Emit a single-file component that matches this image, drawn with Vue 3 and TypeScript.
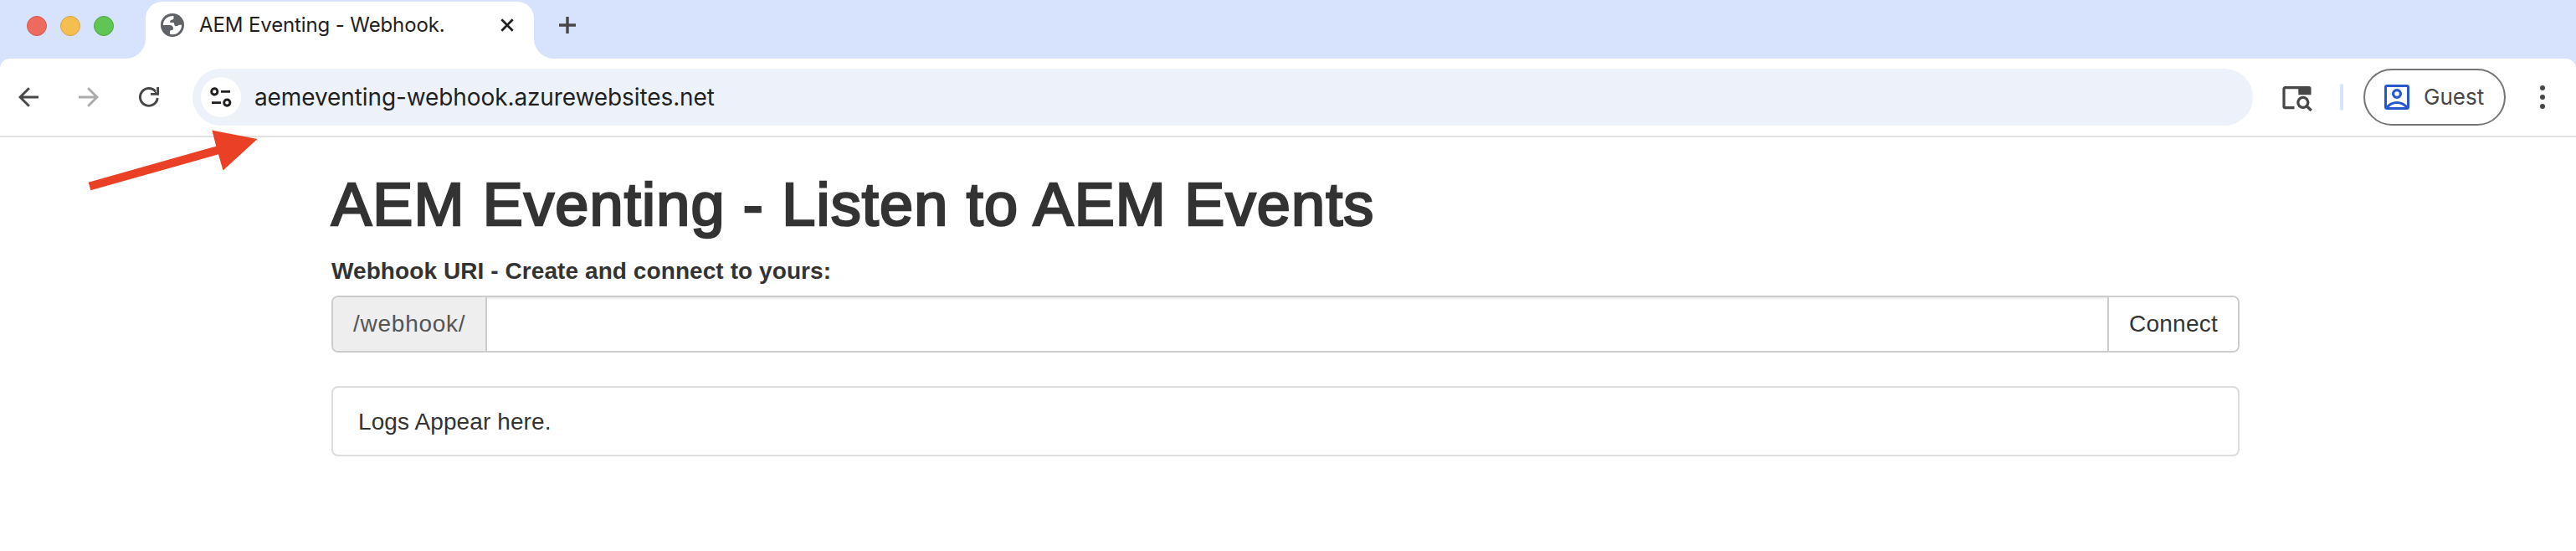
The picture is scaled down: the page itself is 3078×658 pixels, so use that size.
<script setup lang="ts">
const tabTitle = 'AEM Eventing - Webhook.'
const address = 'aemeventing-webhook.azurewebsites.net'
const lights: string[] = ['red', 'yellow', 'green']
</script>

<template>
  <div class="window">
    <header class="strip">
      <div class="lights">
        <span v-for="c in lights" :key="c" class="light" :class="c"></span>
      </div>
      <div class="tab">
        <svg class="globe" viewBox="0 0 28 28">
          <circle cx="14" cy="14" r="14" fill="#5f6368" />
          <path
            fill="#fff"
            d="M2.900 14C2.900 7.500 8 2.900 15.500 3v2.500c0 1.600-1 2-2.200 2.200-1.600.2-2.200.9-2.200 2.200 0 1 .8 1.200 2 1.200h1.500c1.200 0 1.500.6 1.600 1.800.2 1.500 1 2.200 2.500 2.200 1.800 0 2.300-1.400 3.500-1.400H25.100C25 20.500 20 25.300 14 25.200c-1 0-2-.1-3-.4v-3c0-1.200.6-1.600 2-1.700 1.500-.1 2-.8 2-2.100 0-2.600-1.500-4-4.500-4z"
          />
        </svg>
        <span class="tab-title">{{ tabTitle }}</span>
        <svg class="close" viewBox="0 0 16 16">
          <path d="M1.300 1.300 14.700 14.700M14.700 1.300 1.300 14.700" stroke="#1f1f1f" stroke-width="2.700" />
        </svg>
      </div>
      <svg class="plus" viewBox="0 0 20 20">
        <path d="M10 0V20M0 10H20" stroke="#474747" stroke-width="3.400" />
      </svg>
    </header>

    <nav class="toolbar">
      <svg class="nav back" viewBox="0 0 24 24">
        <path d="M24 12H2M12.800 1.200 2 12l10.800 10.800" fill="none" stroke="#474747" stroke-width="2.900" />
      </svg>
      <svg class="nav forward" viewBox="0 0 24 24">
        <path d="M0 12H22M11.200 1.200 22 12 11.200 22.800" fill="none" stroke="#ababab" stroke-width="2.900" />
      </svg>
      <svg class="nav reload" viewBox="0 0 24 24">
        <path d="M22.200 13A10.400 10.400 0 1 1 19.800 5.200" fill="none" stroke="#474747" stroke-width="2.900" />
        <path d="M24 0V9.800H14V7.100H21.200V0z" fill="#474747" />
        <path d="M18 3.500 22 7.500V9H19.500z" fill="#474747" />
      </svg>
      <div class="omnibox">
        <span class="site">
          <svg viewBox="0 0 26 24">
            <g fill="none" stroke="#1f1f1f" stroke-width="2.900">
              <circle cx="5.300" cy="5.400" r="3.600" />
              <circle cx="20.300" cy="18.600" r="3.600" />
              <path d="M13 5.400H24M2 18.600H13" />
            </g>
          </svg>
        </span>
        <span class="address">{{ address }}</span>
      </div>
      <svg class="search-tabs" viewBox="0 0 36 31">
        <path d="M14.500 26.600H3.300Q2 26.600 2 25.300V4Q2 2.700 3.300 2.700H32" fill="none" stroke="#474747" stroke-width="3.200" />
        <path d="M3.300 1.100H32Q34.500 1.100 34.500 3.600V11.300H19.300V3H3.300z" fill="#474747" />
        <circle cx="24.800" cy="20.300" r="6" fill="none" stroke="#474747" stroke-width="3.300" />
        <path d="M28.800 24.300 34.700 30" stroke="#474747" stroke-width="3.400" />
      </svg>
      <span class="divider"></span>
      <button class="guest">
        <svg viewBox="0 0 30 30">
          <g fill="none" stroke="#2757cf" stroke-width="3">
            <rect x="1.500" y="1.500" width="27" height="27" rx="1.800" />
            <circle cx="15" cy="11" r="4.400" stroke-width="3.200" />
            <path d="M3 27.200Q8 21.500 15 21.500T27 27.200" />
          </g>
        </svg>
        <span>Guest</span>
      </button>
      <span class="menu"><i v-for="n in 3" :key="n"></i></span>
    </nav>

    <main class="page">
      <h1>AEM Eventing - Listen to AEM Events</h1>
      <label class="label" for="hook">Webhook URI - Create and connect to yours:</label>
      <div class="group">
        <span class="addon">/webhook/</span>
        <input id="hook" class="field" type="text" />
        <button class="connect"><span>Connect</span></button>
      </div>
      <div class="logs"><span>Logs Appear here.</span></div>
    </main>

    <svg class="pointer" viewBox="0 0 210 80">
      <path d="M5.700 67.700 158.300 24.700 153.300 5.500 207.500 16.100 166.500 53.500 161 34.300 8.300 77.300z" fill="#ea4025" />
    </svg>
  </div>
</template>

<style>
body {
  margin: 0;
  background: #fff;
}
</style>

<style scoped>
.window {
  position: relative;
  width: 3078px;
  height: 658px;
  overflow: hidden;
  background: #fff;
  font-family: Inter, Roboto, sans-serif;
}
.window * {
  box-sizing: border-box;
}
svg {
  display: block;
  flex: none;
}
span {
  white-space: nowrap;
}
.strip {
  display: flex;
  height: 80px;
  background: #d7e2fc;
}
.lights {
  display: flex;
  gap: 16px;
  width: 174px;
  padding: 19px 0 0 32px;
}
.light {
  width: 24px;
  height: 24px;
  border-radius: 50%;
}
.red {
  background: #ec6a5e;
  border: 1px solid #d5564c;
}
.yellow {
  background: #f5bf4f;
  border: 1px solid #d8a13c;
}
.green {
  background: #61c554;
  border: 1px solid #50a73f;
}
.tab {
  position: relative;
  display: flex;
  width: 464px;
  height: 68px;
  margin-top: 2px;
  padding-left: 18px;
  background: #fff;
  border-radius: 20px 20px 0 0;
}
.tab::before,
.tab::after {
  content: '';
  position: absolute;
  bottom: 0;
  width: 24px;
  height: 24px;
}
.tab::before {
  left: -24px;
  background: radial-gradient(circle at 0 0, transparent 23.500px, #fff 24.500px);
}
.tab::after {
  right: -24px;
  background: radial-gradient(circle at 100% 0, transparent 23.500px, #fff 24.500px);
}
.globe {
  width: 28px;
  height: 28px;
  margin-top: 14px;
}
.tab-title {
  width: 360px;
  margin-left: 18px;
  padding-top: 12px;
  font-size: 24px;
  line-height: 32px;
  letter-spacing: -0.12px;
  color: #1f1f1f;
}
.close {
  width: 16px;
  height: 16px;
  margin-top: 20px;
}
.plus {
  width: 20px;
  height: 20px;
  margin: 20px 0 0 30px;
}
.toolbar {
  display: flex;
  align-items: center;
  height: 94px;
  margin-top: -10px;
  padding: 0 0 0 22px;
  background: #fff;
  border-bottom: 2px solid #e1e1e1;
  border-radius: 12px 12px 0 0;
}
.nav {
  width: 24px;
  height: 24px;
}
.forward {
  margin-left: 48px;
}
.reload {
  margin-left: 48px;
}
.omnibox {
  display: flex;
  align-items: center;
  width: 2462px;
  height: 68px;
  margin-left: 40px;
  padding-left: 10px;
  background: #edf2fa;
  border-radius: 34px;
}
.site {
  display: flex;
  align-items: center;
  justify-content: center;
  width: 48px;
  height: 48px;
  border-radius: 50%;
  background: #fff;
}
.site svg {
  width: 26px;
  height: 24px;
}
.address {
  margin-left: 16px;
  font-size: 28px;
  line-height: 40px;
  letter-spacing: -0.1px;
  color: #1f1f1f;
}
.search-tabs {
  width: 36px;
  height: 31px;
  margin: 2px 0 0 35px;
}
.divider {
  width: 4px;
  height: 32px;
  margin-left: 33px;
  border-radius: 2px;
  background: #d7e2fc;
}
.guest {
  display: flex;
  align-items: center;
  width: 170px;
  height: 68px;
  margin-left: 24px;
  padding: 0 0 0 23px;
  background: #fff;
  border: 2px solid #757575;
  border-radius: 34px;
  font: 26px/36px Inter, Roboto, sans-serif;
  color: #474747;
}
.guest svg {
  width: 30px;
  height: 30px;
}
.guest span {
  margin-left: 17px;
}
.menu {
  display: flex;
  flex-direction: column;
  gap: 5px;
  margin-left: 41px;
}
.menu i {
  width: 6px;
  height: 6px;
  border-radius: 50%;
  background: #474747;
}
.page {
  width: 2280px;
  margin-left: 396px;
  padding-top: 40px;
  font-family: 'Liberation Sans', Arial, sans-serif;
  font-size: 28px;
  line-height: 40px;
  color: #333;
}
h1 {
  margin: 0;
  font-size: 72px;
  line-height: 80px;
  font-weight: 400;
  letter-spacing: 1.2px;
  white-space: nowrap;
  -webkit-text-stroke: 2.6px #333;
}
.label {
  display: block;
  width: max-content;
  margin-top: 20px;
  font-weight: 700;
  letter-spacing: 0.08px;
}
.group {
  display: flex;
  height: 68px;
  margin-top: 9px;
  border: 2px solid #ccc;
  border-radius: 8px;
  overflow: hidden;
}
.addon {
  display: flex;
  align-items: center;
  width: 184px;
  padding-left: 24px;
  background: #eee;
  border-right: 2px solid #ccc;
  letter-spacing: 0.75px;
  color: #555;
}
.field {
  flex: 1;
  border: 0;
  outline: 0;
  background: #fff;
  box-shadow: inset 0 2px 2px rgba(0, 0, 0, 0.075);
}
.connect {
  width: 156px;
  padding: 0 0 0 24px;
  border: 0;
  border-left: 2px solid #ccc;
  background: #fff;
  font: 28px/40px 'Liberation Sans', Arial, sans-serif;
  letter-spacing: 0.25px;
  text-align: left;
  color: #333;
}
.logs {
  height: 84px;
  margin-top: 40px;
  padding: 21px 30px;
  border: 2px solid #ddd;
  border-radius: 8px;
  letter-spacing: 0.1px;
}
.pointer {
  position: absolute;
  left: 100px;
  top: 150px;
  width: 210px;
  height: 80px;
}
</style>
